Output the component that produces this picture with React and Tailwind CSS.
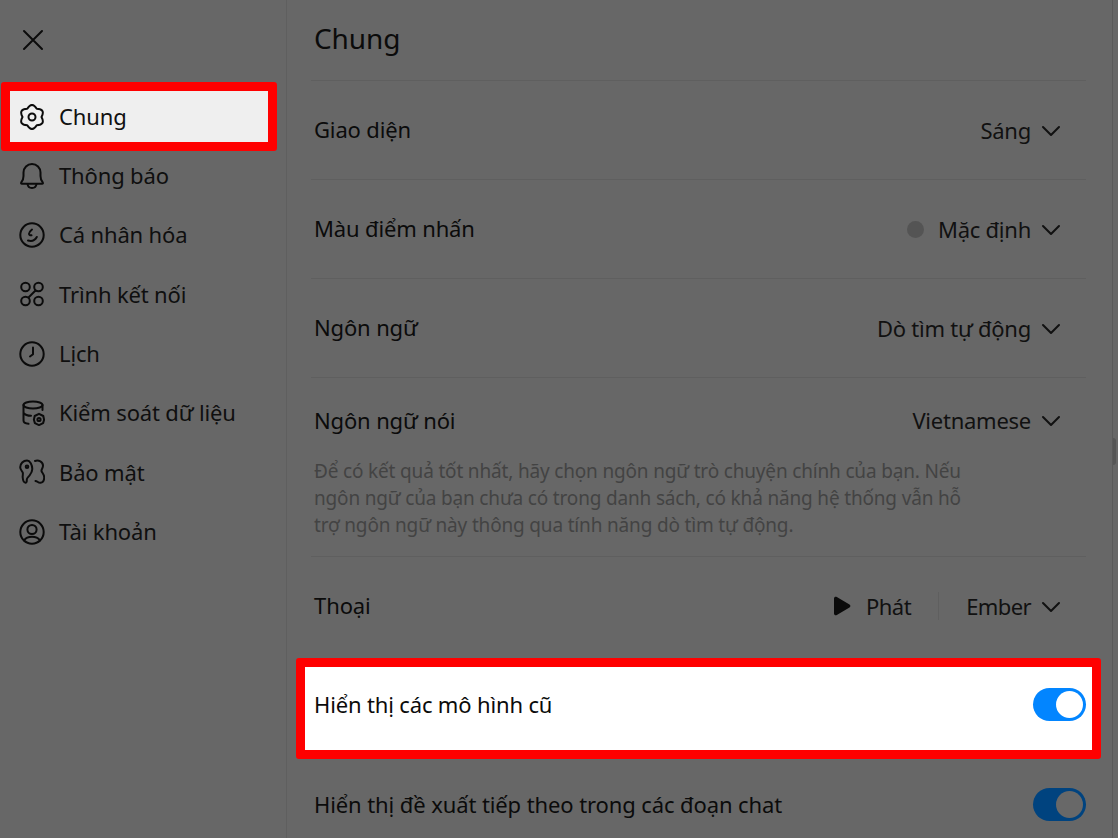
const font = { fontFamily: '"Noto Sans", "Open Sans", sans-serif' };

function Icon({ children }) {
  return (
    <svg width="26" height="26" viewBox="0 0 26 26" fill="none" stroke="#0b0b0b" strokeWidth="2" strokeLinecap="round" strokeLinejoin="round" className="shrink-0">
      {children}
    </svg>
  );
}

const GearIcon = () => (
  <Icon>
    <path d="M8.250 4.770Q13-2.800 17.750 4.770 26.700 5.100 22.500 13 26.700 20.900 17.750 21.230 13 28.800 8.250 21.230-.7 20.900 3.500 13-.7 5.100 8.250 4.770Z" />
    <circle cx="13" cy="13" r="3.500" />
  </Icon>
);

const BellIcon = () => (
  <Icon>
    <path d="M2.200 19.500c1.500-1.500 2.300-3.500 2.300-6.500V9.500a8.500 8.500 0 0 1 17 0V13c0 3 .8 5 2.300 6.500.4.500.1 1.200-.6 1.200H2.800c-.7 0-1-.7-.6-1.200z" />
    <path d="M8.500 21c.3 2.500 2 4 4.500 4s4.200-1.500 4.500-4" />
  </Icon>
);

const SmileIcon = () => (
  <Icon>
    <circle cx="13" cy="13" r="11.700" />
    <path d="M13 7.500c-1.900 1.500-3 3-3 4.300 0 1.200 1.200 1.700 2.500 1.500" />
    <path d="M9 18.500c3.500 1 7-.2 8.800-3.500" />
  </Icon>
);

const ConnectorIcon = () => (
  <Icon>
    <circle cx="6.500" cy="6" r="4.300" />
    <circle cx="19.500" cy="6" r="4.300" />
    <circle cx="6.500" cy="20" r="4.300" />
    <circle cx="19.500" cy="20" r="4.300" />
    <path d="M16.500 9.500 9.500 16.500" />
  </Icon>
);

const ClockIcon = () => (
  <Icon>
    <circle cx="13" cy="13" r="11.700" />
    <path d="M14 6.500v6.800l-3 2.200" />
  </Icon>
);

const DataIcon = () => (
  <Icon>
    <ellipse cx="14" cy="5" rx="9.500" ry="3.500" />
    <path d="M4.500 5v15.500c0 1.800 1.500 3 5 3.300M23.500 5v5M4.500 13c1.500 1.800 4 2.700 7.500 2.800" />
    <path d="M20 13.800l4.300 2.200.8 3.700-1 3.400-4.100 2-4.100-2-1-3.400.8-3.700z" />
    <circle cx="20" cy="19.500" r="1.600" />
  </Icon>
);

const SecurityIcon = () => (
  <Icon>
    <path d="M8 1.500a6.800 6.800 0 0 0-6.800 6.800c0 2.300 1.800 3.700 2.500 5.200.6 1.400-.2 3 0 5 .2 2.300 1 5 2.800 5.200 1.400.1 1.300-2 1.300-3.200 0-1.600 1.700-2.700 2.700-4 1.500-2 2.800-3.600 2.800-6.400 0-4-2.300-8.600-5.300-8.600z" />
    <circle cx="8" cy="7.800" r="1.300" />
    <path d="M16 2c3.700-1.300 8 1 8 4.800 0 2.600-1.800 3.200-1.500 5.200.3 1.800 2.700 3 2.700 6.200 0 2.600-1.300 5.300-3.700 5.600-2.300.3-3.300-1.800-5-1.900" />
  </Icon>
);

const AccountIcon = () => (
  <Icon>
    <circle cx="13" cy="13" r="11.700" />
    <circle cx="13" cy="10.500" r="4.600" />
    <path d="M5 21.500c1.800-2.600 4.700-3.700 8-3.700s6.200 1.100 8 3.700" />
  </Icon>
);

const navItems = [
  { label: "Thông báo", icon: BellIcon },
  { label: "Cá nhân hóa", icon: SmileIcon },
  { label: "Trình kết nối", icon: ConnectorIcon },
  { label: "Lịch", icon: ClockIcon },
  { label: "Kiểm soát dữ liệu", icon: DataIcon },
  { label: "Bảo mật", icon: SecurityIcon },
  { label: "Tài khoản", icon: AccountIcon },
];

function Select({ children, tight }) {
  return (
    <div className={`flex items-center gap-[10px] pr-[25px] text-[22px] text-[#111] ${tight ? "tracking-[-0.6px]" : "tracking-[-0.25px]"}`}>
      {children}
      <svg width="20" height="12" viewBox="0 0 20 12" fill="none" stroke="#111" strokeWidth="2" strokeLinecap="round" strokeLinejoin="round" className="mt-[1px]">
        <path d="M2 2l8 8 8-8" />
      </svg>
    </div>
  );
}

function Row({ label, children }) {
  return (
    <div className="flex h-[99px] items-center justify-between border-b border-[#5f5f5f] pl-[3px]">
      <span className="-mt-[2px] text-[22px] tracking-[-0.15px] text-[#0b0b0b]">{label}</span>
      {children}
    </div>
  );
}

function Toggle({ dim }) {
  return (
    <div className={`flex h-[33px] w-[53px] items-center justify-end rounded-full pr-[3px] ${dim ? "bg-[#00437f]" : "bg-[#0285ff]"}`}>
      <div className={`h-[27px] w-[27px] rounded-full ${dim ? "bg-[#686868]" : "bg-white"}`} />
    </div>
  );
}

export default function App() {
  return (
    <div style={font} className="flex h-[838px] w-[1118px] overflow-hidden bg-[#676767] tracking-[-0.1px]">
      {/* Sidebar */}
      <aside className="w-[287px] shrink-0 border-r border-[#5f5f5f] pl-px pr-[9px]">
        <div className="flex h-[82px] items-center pb-[3px] pl-[21px]">
          <svg width="22" height="22" viewBox="0 0 22 22" fill="none" stroke="#0b0b0b" strokeWidth="2" strokeLinecap="round">
            <path d="M2 2l18 18M20 2 2 20" />
          </svg>
        </div>
        <div className="flex h-[69px] items-center gap-[14px] rounded-[3px] border-[9px] border-[#ff0000] bg-[#efefef] pl-[9px] text-[22px] text-[#111]">
          <GearIcon />
          Chung
        </div>
        <nav className="-mt-[5px]">
          {navItems.map(({ label, icon: NavIcon }) => (
            <div key={label} className="flex h-[59.33px] items-center gap-[14px] pl-[18px] text-[22px] tracking-[-0.15px] text-[#0f0f0f]">
              <NavIcon />
              {label}
            </div>
          ))}
        </nav>
      </aside>

      {/* Main */}
      <main className="w-[825px] shrink-0 pl-[24px]">
        <div className="w-[775px]">
          <h1 className="flex h-[81px] items-center border-b border-[#5f5f5f] pb-[4px] pl-[3px] text-[28px] font-normal text-[#0b0b0b]">Chung</h1>
          <Row label="Giao diện">
            <Select>Sáng</Select>
          </Row>
          <Row label="Màu điểm nhấn">
            <Select>
              <span className="mr-[4px] h-[17px] w-[17px] rounded-full bg-[#545454]" />
              Mặc định
            </Select>
          </Row>
          <Row label="Ngôn ngữ">
            <Select>Dò tìm tự động</Select>
          </Row>
          <div className="h-[179px] border-b border-[#5f5f5f] pl-[3px] pt-[26px]">
            <div className="flex items-center justify-between">
              <span className="text-[22px] tracking-[-0.15px] text-[#0b0b0b]">Ngôn ngữ nói</span>
              <Select>Vietnamese</Select>
            </div>
            <p className="mt-[21px] w-[655px] text-[19px] leading-[27px] tracking-[-0.17px] text-[#434343]">
              Để có kết quả tốt nhất, hãy chọn ngôn ngữ trò chuyện chính của bạn. Nếu ngôn ngữ của bạn chưa có trong danh sách, có khả năng hệ thống vẫn hỗ trợ ngôn ngữ này thông qua tính năng dò tìm tự động.
            </p>
          </div>
          <div className="flex h-[101px] items-center justify-between pb-[3px] pl-[3px]">
            <span className="-mt-[2px] text-[22px] text-[#0b0b0b]">Thoại</span>
            <div className="flex items-center">
              <div className="flex items-center gap-[15px] pr-[27px] text-[22px] tracking-[-0.5px] text-[#111]">
                <svg width="18" height="20" viewBox="0 0 18 20" fill="#0b0b0b">
                  <path d="M1 2.500C1 1 2.500.3 3.800 1L16.500 8.500c1.200.7 1.200 2.300 0 3L3.800 19C2.500 19.700 1 19 1 17.500z" />
                </svg>
                Phát
              </div>
              <div className="h-[28px] w-px bg-[#5f5f5f]" />
              <div className="pl-[27px]">
                <Select tight>Ember</Select>
              </div>
            </div>
          </div>
          <div className="-mx-[15px] flex h-[101px] items-center justify-between rounded-[3px] border-[9px] border-[#ff0000] bg-white pb-[8px] pl-[9px] pr-[6px]">
            <span className="text-[22px] tracking-[-0.15px] text-[#0b0b0b]">Hiển thị các mô hình cũ</span>
            <Toggle />
          </div>
          <div className="flex h-[90px] items-center justify-between pl-[3px]">
            <span className="text-[22px] text-[#0b0b0b]">Hiển thị đề xuất tiếp theo trong các đoạn chat</span>
            <Toggle dim />
          </div>
        </div>
      </main>

      {/* Page behind the dialog, only a sliver shows */}
      <div className="flex-1 border-l border-[#5a5a5a] pt-[438px]">
        <div className="h-[27px] w-[3px] rounded-r-full bg-[#565656]" />
      </div>
    </div>
  );
}
